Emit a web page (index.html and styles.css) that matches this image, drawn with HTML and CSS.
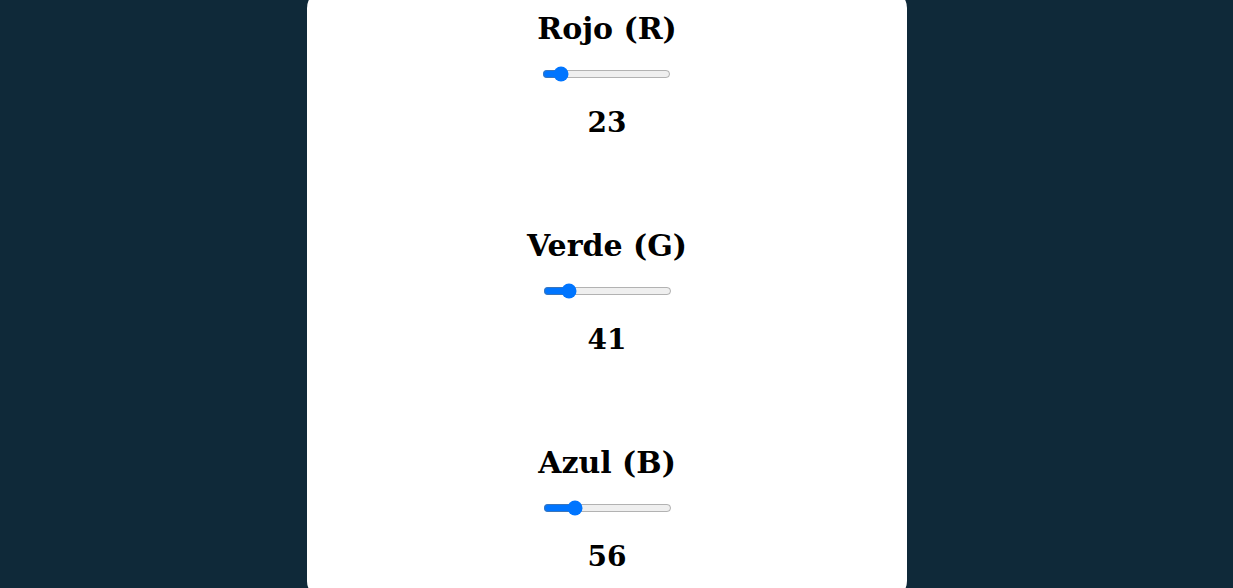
FILE: index.html
```html
<!DOCTYPE html>
<html>
  <head>
    <meta charset="utf-8">
    <title>Mezclador RGB</title>
    <link rel="stylesheet" href="styles.css">
  </head>
  <body>
    <div class="card">
      <div class="channel">
        <h2 class="label">Rojo (R)</h2>
        <input type="range" class="slider" min="0" max="255" value="23">
        <h2 class="value">23</h2>
      </div>
      <div class="channel">
        <h2 class="label">Verde (G)</h2>
        <input type="range" class="slider" min="0" max="255" value="41">
        <h2 class="value">41</h2>
      </div>
      <div class="channel">
        <h2 class="label">Azul (B)</h2>
        <input type="range" class="slider" min="0" max="255" value="56">
        <h2 class="value">56</h2>
      </div>
    </div>
  </body>
</html>
```

FILE: styles.css
```css
html,body{margin:0;height:100%}
body{
  display:flex;justify-content:center;align-items:center;
  background:#0f2939;
  overflow:hidden;
  padding-right:19px;
  box-sizing:border-box;
  font-family:"DejaVu Serif","Liberation Serif",serif;
}
.card{
  width:600px;
  background:white;
  border-radius:18px;
  padding:21px 0 24px;
  display:flex;flex-direction:column;align-items:center;
  gap:87px;
  flex-shrink:0;
}
.channel{display:flex;flex-direction:column;align-items:center}
.label,.value{margin:0;line-height:36px;color:#000;font-weight:bold}
.label{font-size:30px}
.value{font-size:28px}
.slider{margin:19px 0 23px;width:129px;height:16px}
```
